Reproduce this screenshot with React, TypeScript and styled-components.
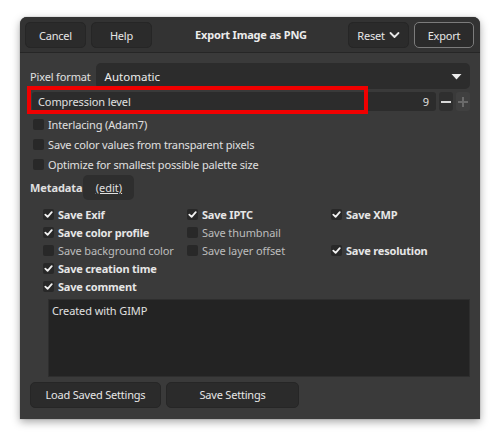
import * as React from "react";
import styled, { createGlobalStyle } from "styled-components";

const GlobalStyle = createGlobalStyle`
  html, body {
    margin: 0;
    padding: 0;
    background: #ffffff;
  }
  body {
    font-family: "Noto Sans", "DejaVu Sans", sans-serif;
    font-size: 11px;
    color: #e2e2e2;
  }
`;

/* =========================
 * Styled components
 * ========================= */

const Page = styled.div`
  width: 500px;
  height: 442px;
  padding: 17px 20px 0;
  box-sizing: border-box;
`;

const Dialog = styled.div`
  width: 460px;
  height: 402px;
  background: #3a3a3a;
  border-radius: 7px 7px 0 0;
  box-shadow: 0 3px 9px rgba(0, 0, 0, 0.35), 0 0 1px rgba(0, 0, 0, 0.6);
  display: flex;
  flex-direction: column;
  overflow: hidden;
`;

const HeaderBar = styled.div`
  height: 36px;
  flex-shrink: 0;
  box-sizing: border-box;
  padding: 5px 6px 0 5px;
  background: #333333;
  border-bottom: 1px solid #262626;
  display: flex;
  align-items: flex-start;
  gap: 5px;
`;

const HeaderTitle = styled.div`
  flex: 1;
  text-align: center;
  font-weight: 700;
  font-size: 11px;
  letter-spacing: -0.2px;
  line-height: 26px;
  color: #ececec;
  padding-left: 2px;
`;

const Button = styled.button<{ $width: number; $accent?: boolean }>`
  width: ${({ $width }) => $width}px;
  height: 26px;
  padding: 0;
  border-radius: 5px;
  border: 1px solid ${({ $accent }) => ($accent ? "#7c7c7c" : "#262626")};
  background: #2b2b2b;
  color: #e6e6e6;
  font-family: inherit;
  font-size: 11px;
  letter-spacing: -0.2px;
  display: flex;
  align-items: center;
  justify-content: center;
  gap: 4px;
  box-sizing: border-box;
`;

const Body = styled.div`
  flex: 1;
  padding: 10px 10px 12px 10px;
  display: flex;
  flex-direction: column;
`;

const FormatRow = styled.div`
  display: flex;
  align-items: center;
  gap: 5px;
  height: 26px;
`;

const Label = styled.span<{ $bold?: boolean }>`
  font-size: 11px;
  letter-spacing: ${({ $bold }) => ($bold ? "-0.1px" : "-0.15px")};
  font-weight: ${({ $bold }) => ($bold ? 700 : 400)};
  color: #e0e0e0;
  white-space: nowrap;
`;

const Combo = styled.div`
  flex: 1;
  height: 26px;
  box-sizing: border-box;
  background: #2c2c2c;
  border-radius: 5px;
  display: flex;
  align-items: center;
  justify-content: space-between;
  padding: 0 8px 0 9px;
  font-size: 11.5px;
  color: #ececec;
`;

const SpinRow = styled.div`
  position: relative;
  margin: 3px 0 0 2px;
  display: flex;
  align-items: center;
  gap: 3px;
  height: 19px;
`;

const SpinEntry = styled.div`
  flex: 1;
  height: 19px;
  box-sizing: border-box;
  background: #2c2c2c;
  border-radius: 3px;
  display: flex;
  align-items: center;
  justify-content: space-between;
  padding: 0 7px 0 6px;
  font-size: 11px;
  letter-spacing: -0.1px;
  color: #e0e0e0;
`;

const SpinButton = styled.div<{ $dim?: boolean }>`
  width: 14px;
  height: 19px;
  border-radius: 3px;
  background: ${({ $dim }) => ($dim ? "#404040" : "#2f2f2f")};
  display: flex;
  align-items: center;
  justify-content: center;
`;

const Highlight = styled.div`
  position: absolute;
  left: -5px;
  top: -6px;
  width: 341px;
  height: 28px;
  box-sizing: border-box;
  border: 4px solid #f00000;
  pointer-events: none;
`;

const OptionList = styled.div`
  display: flex;
  flex-direction: column;
  margin: 3px 0 0 3px;
`;

const CheckRow = styled.div<{ $height: number }>`
  display: flex;
  align-items: center;
  gap: 4px;
  height: ${({ $height }) => $height}px;
`;

const Box = styled.span`
  width: 11px;
  height: 11px;
  border-radius: 2px;
  background: #282828;
  display: flex;
  align-items: center;
  justify-content: center;
  flex-shrink: 0;
`;

const MetaHeader = styled.div`
  display: flex;
  align-items: center;
  gap: 1px;
  margin-top: 1px;
  height: 25px;
`;

const EditButton = styled.div`
  width: 51px;
  height: 25px;
  border-radius: 5px;
  background: #2e2e2e;
  display: flex;
  align-items: center;
  justify-content: center;
  font-size: 11px;
  text-decoration: underline;
  color: #e0e0e0;
`;

const MetaGrid = styled.div`
  display: grid;
  grid-template-columns: 144px 144px 1fr;
  grid-auto-rows: 17.8px;
  margin: 6px 0 0 13px;
`;

const MetaItem = styled.div`
  display: flex;
  align-items: center;
  gap: 4px;
`;

const MetaText = styled.span<{ $checked: boolean }>`
  font-size: 11px;
  letter-spacing: ${({ $checked }) => ($checked ? "-0.2px" : "-0.1px")};
  font-weight: ${({ $checked }) => ($checked ? 700 : 400)};
  color: ${({ $checked }) => ($checked ? "#e6e6e6" : "#bdbdbd")};
  white-space: nowrap;
`;

const CommentBox = styled.div`
  margin: 4px 0 0 18px;
  height: 78px;
  box-sizing: border-box;
  background: #232323;
  border: 1px solid #2e2e2e;
  padding: 3px 3px;
  font-size: 11px;
  letter-spacing: -0.1px;
  color: #e0e0e0;
`;

const Footer = styled.div`
  display: flex;
  gap: 5px;
  margin-top: 5px;
`;

/* =========================
 * Icons
 * ========================= */

const CheckMark = () => (
  <svg width="9" height="9" viewBox="0 0 10 10">
    <polyline
      points="1.5,5.2 4,7.6 8.6,2.4"
      fill="none"
      stroke="#f2f2f2"
      strokeWidth="2"
      strokeLinecap="round"
      strokeLinejoin="round"
    />
  </svg>
);

const Chevron = () => (
  <svg width="11" height="8" viewBox="0 0 11 8">
    <polyline
      points="1.5,2 5.5,6 9.5,2"
      fill="none"
      stroke="#e6e6e6"
      strokeWidth="1.8"
      strokeLinecap="round"
      strokeLinejoin="round"
    />
  </svg>
);

const Triangle = () => (
  <svg width="11" height="7" viewBox="0 0 11 7">
    <polygon points="0.5,1 10.5,1 5.5,6.5" fill="#ececec" />
  </svg>
);

const Minus = ({ color }: { color: string }) => (
  <svg width="12" height="12" viewBox="0 0 12 12">
    <rect x="1" y="5" width="10" height="2" fill={color} />
  </svg>
);

const Plus = ({ color }: { color: string }) => (
  <svg width="12" height="12" viewBox="0 0 12 12">
    <rect x="1" y="5" width="10" height="2" fill={color} />
    <rect x="5" y="1" width="2" height="10" fill={color} />
  </svg>
);

/* =========================
 * Data
 * ========================= */

const options = [
  "Interlacing (Adam7)",
  "Save color values from transparent pixels",
  "Optimize for smallest possible palette size",
];

const metadata: { label: string; checked: boolean }[] = [
  { label: "Save Exif", checked: true },
  { label: "Save IPTC", checked: true },
  { label: "Save XMP", checked: true },
  { label: "Save color profile", checked: true },
  { label: "Save thumbnail", checked: false },
  { label: "", checked: false },
  { label: "Save background color", checked: false },
  { label: "Save layer offset", checked: false },
  { label: "Save resolution", checked: true },
  { label: "Save creation time", checked: true },
  { label: "", checked: false },
  { label: "", checked: false },
  { label: "Save comment", checked: true },
];

/* =========================
 * Componente
 * ========================= */

export default function App() {
  return (
    <Page>
      <GlobalStyle />
      <Dialog>
        <HeaderBar>
          <Button $width={61}>Cancel</Button>
          <Button $width={61}>Help</Button>
          <HeaderTitle>Export Image as PNG</HeaderTitle>
          <Button $width={61}>
            Reset <Chevron />
          </Button>
          <Button $width={60} $accent>
            Export
          </Button>
        </HeaderBar>

        <Body>
          <FormatRow>
            <Label>Pixel format</Label>
            <Combo>
              <span>Automatic</span>
              <Triangle />
            </Combo>
          </FormatRow>

          <SpinRow>
            <SpinEntry>
              <span>Compression level</span>
              <span>9</span>
            </SpinEntry>
            <SpinButton>
              <Minus color="#d8d8d8" />
            </SpinButton>
            <SpinButton $dim>
              <Plus color="#6a6a6a" />
            </SpinButton>
            <Highlight />
          </SpinRow>

          <OptionList>
            {options.map((opt) => (
              <CheckRow key={opt} $height={20}>
                <Box />
                <Label>{opt}</Label>
              </CheckRow>
            ))}
          </OptionList>

          <MetaHeader>
            <Label $bold>Metadata</Label>
            <EditButton>(edit)</EditButton>
          </MetaHeader>

          <MetaGrid>
            {metadata.map((m, idx) =>
              m.label ? (
                <MetaItem key={m.label}>
                  <Box>{m.checked && <CheckMark />}</Box>
                  <MetaText $checked={m.checked}>{m.label}</MetaText>
                </MetaItem>
              ) : (
                <div key={`empty-${idx}`} />
              )
            )}
          </MetaGrid>

          <CommentBox>Created with GIMP</CommentBox>

          <Footer>
            <Button $width={131}>Load Saved Settings</Button>
            <Button $width={133}>Save Settings</Button>
          </Footer>
        </Body>
      </Dialog>
    </Page>
  );
}
